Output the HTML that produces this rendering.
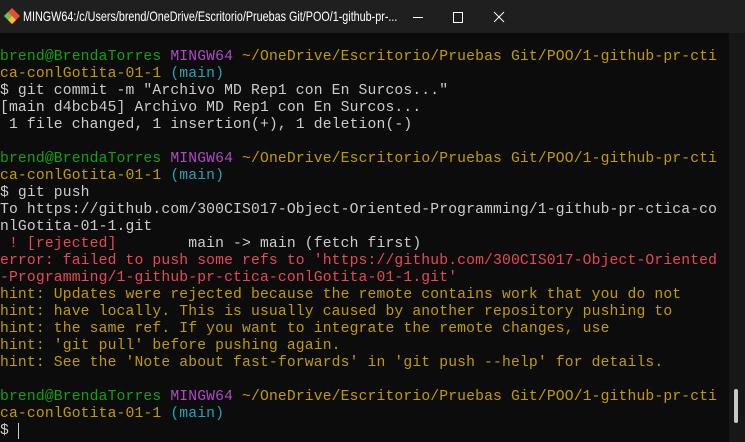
<!DOCTYPE html>
<html><head><style>
html,body{margin:0;padding:0;background:#0c0c0c;width:745px;height:442px;overflow:hidden}
#title{position:absolute;left:0;top:0;width:745px;height:33px;background:#1f1f1f;color:#fff;font:14px "Liberation Sans",sans-serif}
#title .t{position:absolute;left:23px;top:8px;white-space:nowrap;transform:scaleX(0.77);transform-origin:0 0}
#term{position:absolute;left:0;top:49px;width:728px;font:14.7px/17px "Liberation Mono",monospace;letter-spacing:0.15px;color:#cccccc;white-space:pre}
.g{color:#13a10e}.m{color:#b148c6}.y{color:#c19c00}.c{color:#2aa1b3}.r{color:#e74856}
#sb{position:absolute;left:729px;top:33px;width:16px;height:409px;background:#171717}
#th{position:absolute;left:734px;top:389px;width:4px;height:34px;background:#c8c8c8;border-radius:2px}
</style></head><body>
<div id="title">
<svg style="position:absolute;left:4px;top:8px" width="16" height="16" viewBox="0 0 16 16">
<polygon points="8,0 16,8 8,16 0,8" fill="#e94e31"/>
<polygon points="0,8 4,4 8,8 4,12" fill="#6cbf4b"/>
<polygon points="8,8 12,12 8,16 4,12" fill="#f3c132"/>
</svg>
<span class="t">MINGW64:/c/Users/brend/OneDrive/Escritorio/Pruebas Git/POO/1-github-pr-...</span>
<svg style="position:absolute;left:406px;top:10px" width="110" height="14">
<line x1="7" y1="7.5" x2="17" y2="7.5" stroke="#fff" stroke-width="1"/>
<rect x="47.5" y="2.5" width="9" height="10" fill="none" stroke="#fff" stroke-width="1"/>
<line x1="88" y1="2" x2="98" y2="12" stroke="#fff"/><line x1="98" y1="2" x2="88" y2="12" stroke="#fff"/>
</svg>
</div>
<div id="term"><span class="g">brend@BrendaTorres</span> <span class="m">MINGW64</span> <span class="y">~/OneDrive/Escritorio/Pruebas Git/POO/1-github-pr-cti</span>
<span class="y">ca-conlGotita-01-1</span> <span class="c">(main)</span>
$ git commit -m "Archivo MD Rep1 con En Surcos..."
[main d4bcb45] Archivo MD Rep1 con En Surcos...
 1 file changed, 1 insertion(+), 1 deletion(-)

<span class="g">brend@BrendaTorres</span> <span class="m">MINGW64</span> <span class="y">~/OneDrive/Escritorio/Pruebas Git/POO/1-github-pr-cti</span>
<span class="y">ca-conlGotita-01-1</span> <span class="c">(main)</span>
$ git push
To https://github.com/300CIS017-Object-Oriented-Programming/1-github-pr-ctica-co
nlGotita-01-1.git
<span class="r"> ! [rejected]</span>        main -&gt; main (fetch first)
<span class="r">error: failed to push some refs to 'https://github.com/300CIS017-Object-Oriented
-Programming/1-github-pr-ctica-conlGotita-01-1.git'</span>
<span class="y">hint: Updates were rejected because the remote contains work that you do not
hint: have locally. This is usually caused by another repository pushing to
hint: the same ref. If you want to integrate the remote changes, use
hint: 'git pull' before pushing again.
hint: See the 'Note about fast-forwards' in 'git push --help' for details.</span>

<span class="g">brend@BrendaTorres</span> <span class="m">MINGW64</span> <span class="y">~/OneDrive/Escritorio/Pruebas Git/POO/1-github-pr-cti</span>
<span class="y">ca-conlGotita-01-1</span> <span class="c">(main)</span>
$ <span style="border-left:1px solid #ccc"> </span></div>
<div id="sb"></div><div id="th"></div>
</body></html>
